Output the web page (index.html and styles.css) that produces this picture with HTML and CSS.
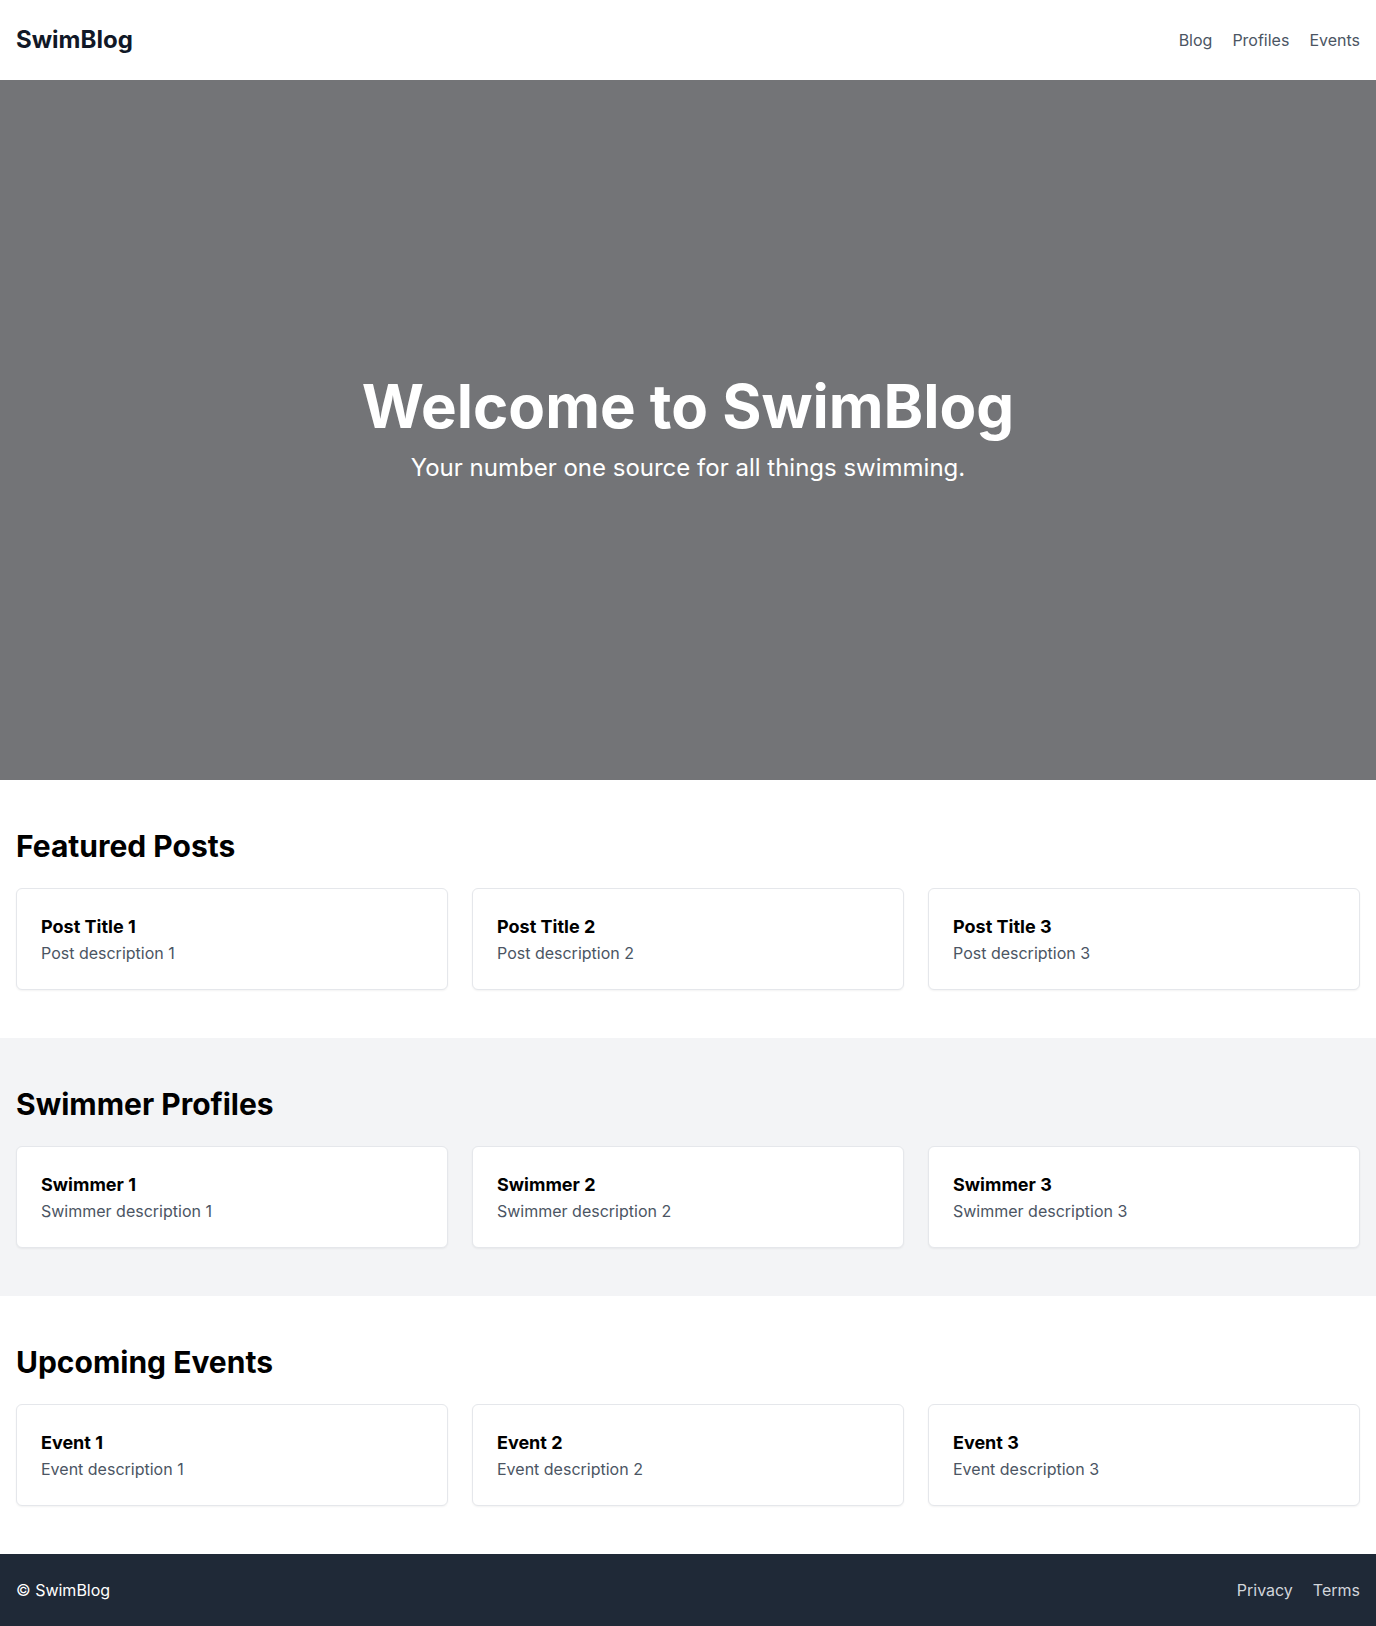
FILE: index.html
```html
<!DOCTYPE html>
<html lang="en">
<head>
<meta charset="utf-8">
<title>SwimBlog</title>
<link rel="stylesheet" href="styles.css">
</head>
<body>
<header class="site-header">
  <div class="container header-inner">
    <div class="logo">SwimBlog</div>
    <nav class="nav">
      <a href="#">Blog</a>
      <a href="#">Profiles</a>
      <a href="#">Events</a>
    </nav>
  </div>
</header>
<section class="hero">
  <h1>Welcome to SwimBlog</h1>
  <p>Your number one source for all things swimming.</p>
</section>
<section class="section">
  <div class="container">
    <h2>Featured Posts</h2>
    <div class="grid">
      <div class="card"><h3>Post Title 1</h3><p>Post description 1</p></div>
      <div class="card"><h3>Post Title 2</h3><p>Post description 2</p></div>
      <div class="card"><h3>Post Title 3</h3><p>Post description 3</p></div>
    </div>
  </div>
</section>
<section class="section alt">
  <div class="container">
    <h2>Swimmer Profiles</h2>
    <div class="grid">
      <div class="card"><h3>Swimmer 1</h3><p>Swimmer description 1</p></div>
      <div class="card"><h3>Swimmer 2</h3><p>Swimmer description 2</p></div>
      <div class="card"><h3>Swimmer 3</h3><p>Swimmer description 3</p></div>
    </div>
  </div>
</section>
<section class="section">
  <div class="container">
    <h2>Upcoming Events</h2>
    <div class="grid">
      <div class="card"><h3>Event 1</h3><p>Event description 1</p></div>
      <div class="card"><h3>Event 2</h3><p>Event description 2</p></div>
      <div class="card"><h3>Event 3</h3><p>Event description 3</p></div>
    </div>
  </div>
</section>
<footer class="footer">
  <div class="container footer-inner">
    <div class="copy">© SwimBlog</div>
    <nav class="footer-nav">
      <a href="#">Privacy</a>
      <a href="#">Terms</a>
    </nav>
  </div>
</footer>
</body>
</html>
```
FILE: styles.css
```css
* { box-sizing: border-box; }
html, body { margin: 0; padding: 0; }
body {
  font-family: Inter, "Noto Sans", "Liberation Sans", sans-serif;
  color: #000;
  background: #fff;
  font-size: 16px;
  line-height: 24px;
}
a { text-decoration: none; color: inherit; }
h1, h2, h3, p { margin: 0; }

.container {
  padding: 0 16px;
}

.site-header {
  background: #fff;
  padding: 24px 0;
}
.header-inner {
  display: flex;
  justify-content: space-between;
  align-items: center;
}
.logo {
  font-size: 24px;
  line-height: 32px;
  font-weight: 700;
  color: #111827;
}
.nav {
  display: flex;
  gap: 20px;
}
.nav a {
  color: #4b5563;
  font-size: 16px;
}

.hero {
  height: 700px;
  background: #737477;
  color: #fff;
  display: flex;
  flex-direction: column;
  align-items: center;
  justify-content: center;
  text-align: center;
}
.hero h1 {
  font-size: 60px;
  line-height: 60px;
  font-weight: 700;
  margin-bottom: 16px;
}
.hero p {
  font-size: 24px;
  line-height: 32px;
}

.section {
  padding: 48px 0;
}
.section.alt {
  background: #f3f4f6;
}
.section h2 {
  font-size: 30px;
  line-height: 36px;
  font-weight: 700;
  margin-bottom: 24px;
}
.grid {
  display: grid;
  grid-template-columns: repeat(3, 1fr);
  gap: 24px;
}
.card {
  background: #fff;
  border: 1px solid #e5e7eb;
  border-radius: 6px;
  padding: 24px;
  box-shadow: 0 1px 2px rgba(0,0,0,0.05);
}
.card h3 {
  font-size: 18px;
  line-height: 28px;
  font-weight: 700;
}
.card p {
  color: #4b5563;
}

.footer {
  background: #1f2937;
  color: #fff;
  padding: 24px 0;
}
.footer-inner {
  display: flex;
  justify-content: space-between;
  align-items: center;
}
.footer-nav {
  display: flex;
  gap: 20px;
}
.footer-nav a {
  color: #d1d5db;
}
```
